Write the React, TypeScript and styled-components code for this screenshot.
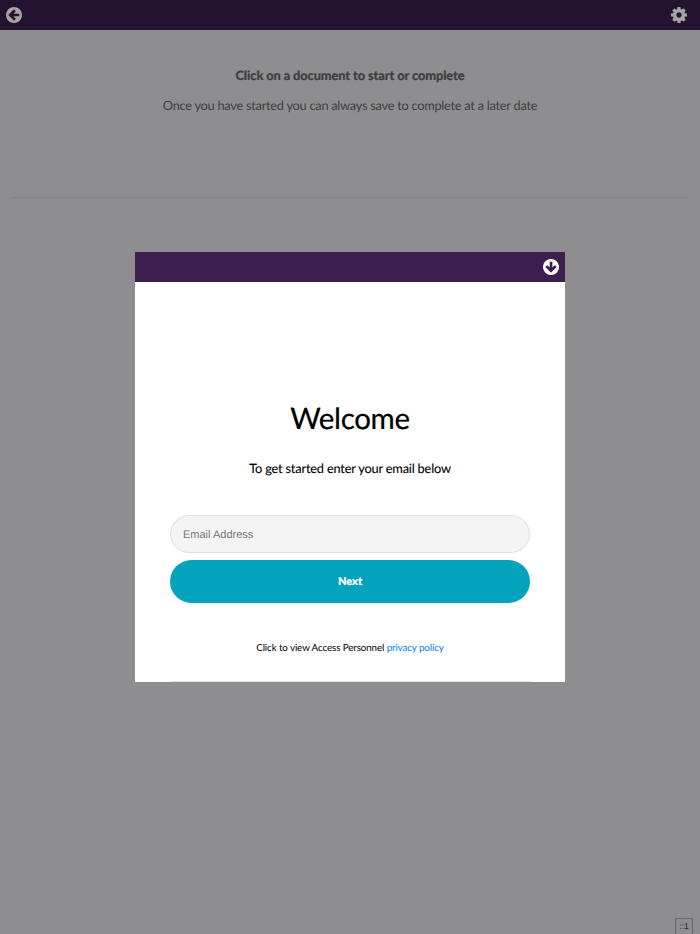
import React from 'react';
import styled, { createGlobalStyle } from 'styled-components';

const Global = createGlobalStyle`
  * { box-sizing: border-box; }
  body { margin: 0; background: #8e8e90; font-family: Lato, sans-serif; text-rendering: geometricPrecision; }
`;
const Page = styled.div`
  position: relative;
  height: 934px;
  overflow: hidden;
  display: flex;
  flex-direction: column;
  background: #8e8e90;
`;
const TopBar = styled.header`
  height: 30px;
  background: #241330;
  color: #a5a5a5;
  display: flex;
  justify-content: space-between;
  align-items: center;
  padding: 0 13px 0 5.7px;
`;
const Icon = styled.svg<{ $turn?: number }>`
  display: block;
  width: 16px;
  height: 16px;
  fill: currentColor;
  transform: rotate(${p => p.$turn ?? 0}deg);
`;
const Intro = styled.section`
  height: 168px;
  margin: 0 11px;
  padding-top: 33px;
  border-bottom: 1px solid #868688;
  text-align: center;
  color: #3f3f41;
  font-size: 12.8px;
  line-height: 24px;
  letter-spacing: -0.265px;
`;
const IntroTitle = styled.div`
  font-weight: 900;
  letter-spacing: -0.09px;
  -webkit-text-stroke: 0.2px currentColor;
  margin-bottom: 6px;
`;
const Modal = styled.main`
  position: absolute;
  left: 135px;
  top: 252px;
  width: 430px;
  height: 430px;
  background: #fff;
  display: flex;
  flex-direction: column;
  color: #000;
`;
const ModalBar = styled.div`
  height: 30px;
  background: #3c1e4f;
  color: #fff;
  display: flex;
  justify-content: flex-end;
  align-items: center;
  padding: 0 5.6px 1px 0;
`;
const Form = styled.form`
  flex: 1;
  margin: 0 35px;
  padding-top: 117px;
  display: flex;
  flex-direction: column;
  text-align: center;
  border-bottom: 1px solid #e5e5e5;
`;
const Title = styled.h1`
  margin: 0;
  font-size: 29.5px;
  line-height: 40px;
  font-weight: 400;
  letter-spacing: -0.35px;
  -webkit-text-stroke: 0.2px currentColor;
`;
const Lead = styled.p`
  margin: 19px 0 37px;
  font-size: 12.8px;
  line-height: 20px;
  letter-spacing: -0.19px;
  -webkit-text-stroke: 0.1px currentColor;
`;
const Email = styled.input`
  height: 38px;
  border: 1px solid #e0e0e0;
  border-radius: 19px;
  background: #f4f4f4;
  padding: 2px 12px 0;
  font: 11px "Liberation Sans", sans-serif;
  text-rendering: geometricPrecision;
  outline: none;
  &::placeholder { color: #757575; opacity: 1; }
`;
const Next = styled.button`
  height: 43px;
  margin-top: 7px;
  padding: 0 0 1px;
  border: 0;
  border-radius: 22px;
  background: #03a3bd;
  color: #fff;
  font: 900 11px Lato, sans-serif;
  text-rendering: geometricPrecision;
  -webkit-text-stroke: 0.2px currentColor;
`;
const Policy = styled.p`
  margin: 37px 0 0;
  font-size: 9.8px;
  line-height: 16px;
  letter-spacing: -0.11px;
`;
const Link = styled.a`
  color: #007bff;
  text-decoration: none;
`;
const Tag = styled.div`
  align-self: flex-end;
  margin: auto 7px 0 0;
  width: 18px;
  height: 16px;
  border: 1px solid #68686a;
  border-bottom: 0;
  font: 8.5px/14px "Liberation Sans", sans-serif;
  color: #222;
  text-align: center;
`;

const ArrowCircle = ({ turn = 0 }: { turn?: number }) => (
  <Icon viewBox="0 128 1536 1536" $turn={turn}>
    <path d="M1280 960v-128q0-26-19-45t-45-19h-502l189-189q19-19 19-45t-19-45l-91-91q-18-18-45-18t-45 18l-362 362-91 91q-18 18-18 45t18 45l91 91 362 362q18 18 45 18t45-18l91-91q18-18 18-45t-18-45l-189-189h502q26 0 45-19t19-45zm256-64q0 209-103 385.5t-279.5 279.5-385.5 103-385.5-103-279.5-279.5-103-385.5 103-385.5 279.5-279.5 385.5-103 385.5 103 279.5 279.5 103 385.5z" />
  </Icon>
);
const Gear = () => (
  <Icon viewBox="0 128 1536 1536">
    <path d="M1024 896q0-106-75-181t-181-75-181 75-75 181 75 181 181 75 181-75 75-181zm512-109v222q0 12-8 23t-20 13l-185 28q-19 54-39 91 35 50 107 138 10 12 10 25t-9 23q-27 37-99 108t-94 71q-12 0-26-9l-138-108q-44 23-91 38-16 136-29 186-7 28-36 28h-222q-14 0-24.5-8.5t-11.5-21.5l-28-184q-49-16-90-37l-141 107q-10 9-25 9-14 0-25-11-126-114-165-168-7-10-7-23 0-12 8-23 15-21 51-66.5t54-70.5q-27-50-41-99l-183-27q-13-2-21-12.5t-8-23.5v-222q0-12 8-23t19-13l186-28q14-46 39-92-40-57-107-138-10-12-10-24 0-10 9-23 26-36 98.5-107.5t94.5-71.5q13 0 26 10l138 107q44-23 91-38 16-136 29-186 7-28 36-28h222q14 0 24.5 8.5t11.5 21.5l28 184q49 16 90 37l142-107q9-9 24-9 13 0 25 10 129 119 165 170 7 8 7 22 0 12-8 23-15 21-51 66.5t-54 70.5q26 50 41 98l183 28q13 2 21 12.5t8 23.5z" />
  </Icon>
);

export default function App() {
  return (
    <Page>
      <Global />
      <TopBar><ArrowCircle /><Gear /></TopBar>
      <Intro>
        <IntroTitle>Click on a document to start or complete</IntroTitle>
        <div>Once you have started you can always save to complete at a later date</div>
      </Intro>
      <Tag>::1</Tag>
      <Modal>
        <ModalBar><ArrowCircle turn={-90} /></ModalBar>
        <Form>
          <Title>Welcome</Title>
          <Lead>To get started enter your email below</Lead>
          <Email type="email" placeholder="Email Address" />
          <Next type="button">Next</Next>
          <Policy>Click to view Access Personnel <Link href="#">privacy policy</Link></Policy>
        </Form>
      </Modal>
    </Page>
  );
}
